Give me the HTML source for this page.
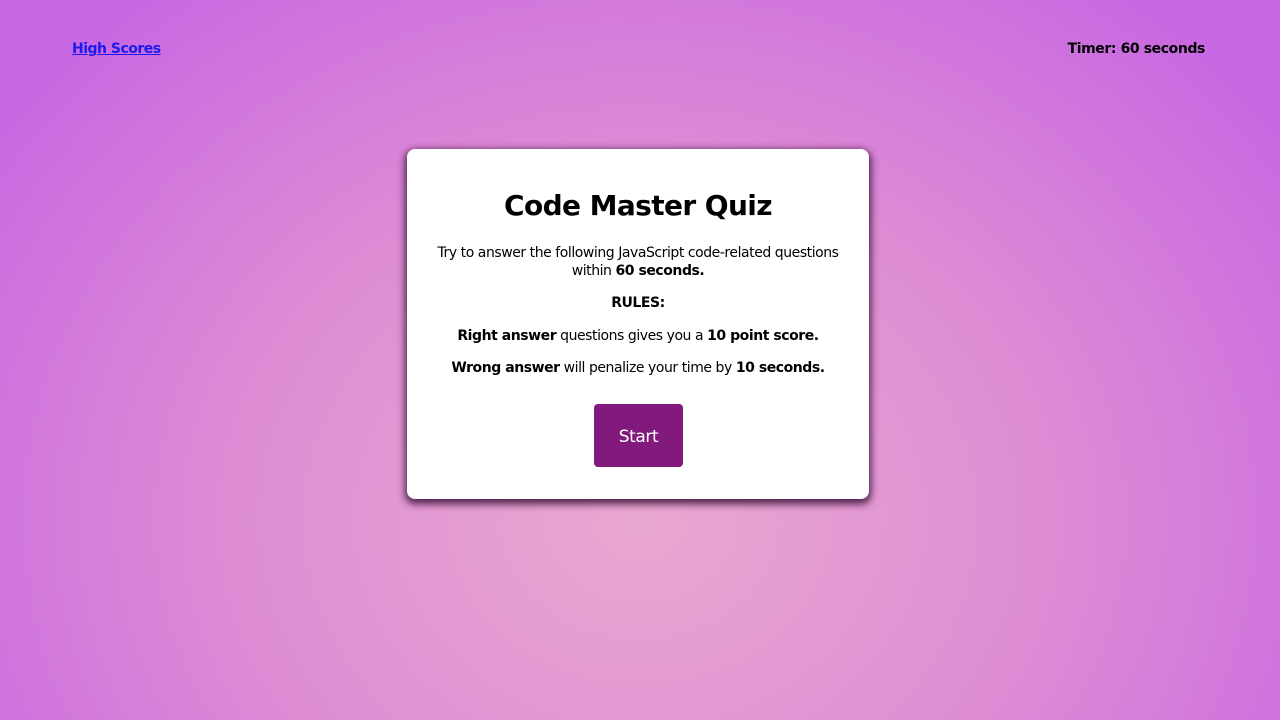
<!DOCTYPE html>
<html><head><meta charset="utf-8"><style>
html,body{margin:0;width:1280px;height:720px;overflow:hidden}
body{background:radial-gradient(ellipse 800px 680px at 640px 520px,#e9a8d0 0%,#de8dd4 50%,#c867e2 100%);font-family:"DejaVu Sans","Liberation Sans",sans-serif;color:#000;position:relative}
.hs{position:absolute;left:72px;top:41px;font-size:14px;font-weight:bold;color:#1a1aee;text-decoration:underline;letter-spacing:-0.5px}
.tm{position:absolute;right:75px;top:41px;font-size:14px;font-weight:bold;letter-spacing:-0.4px}
.card{position:absolute;left:407px;top:149px;width:462px;height:350px;background:#fff;border-radius:8px;box-shadow:0 3px 8px 2px rgba(50,10,50,.85)}
h1{margin:0;position:absolute;top:187px;left:407px;width:462px;text-align:center;font-size:28px;line-height:38px;letter-spacing:-0.6px}
.p{position:absolute;left:407px;width:462px;text-align:center;font-size:14px;line-height:18px;letter-spacing:-0.45px}
.btn{position:absolute;left:594px;top:404px;width:89px;height:63px;background:#821a7e;border-radius:4px;color:#fff;font-size:17px;line-height:66px;text-align:center;letter-spacing:-0.4px}
</style></head><body>
<a class="hs">High Scores</a>
<div class="tm">Timer: 60 seconds</div>
<div class="card"></div>
<h1>Code Master Quiz</h1>
<div class="p" style="top:244px">Try to answer the following JavaScript code-related questions<br>within <b>60 seconds.</b></div>
<div class="p" style="top:294px"><b>RULES:</b></div>
<div class="p" style="top:327px"><b>Right answer</b> questions gives you a <b>10 point score.</b></div>
<div class="p" style="top:359px"><b>Wrong answer</b> will penalize your time by <b>10 seconds.</b></div>
<div class="btn">Start</div>
</body></html>
